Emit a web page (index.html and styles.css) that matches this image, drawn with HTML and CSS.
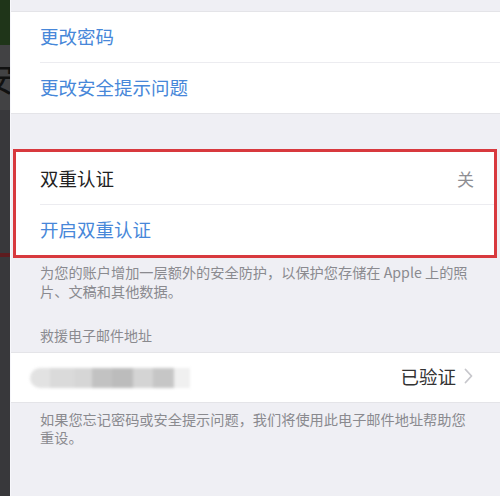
FILE: index.html
```html
<!DOCTYPE html>
<html lang="zh-CN">
<head>
    <meta charset="UTF-8">
    <meta name="viewport" content="width=device-width, initial-scale=1.0">
    <link rel="stylesheet" href="styles.css">
    <title>密码与安全性</title>
</head>
<body>
    <div class="screen">
        <div class="side-strip">
            <div class="strip-green"></div>
            <div class="strip-glyph"><span>安</span></div>
            <div class="strip-gap"></div>
            <div class="strip-red"></div>
        </div>
        <div class="page">
            <div class="group">
                <div class="cell link">更改密码</div>
                <div class="sep"></div>
                <div class="cell link">更改安全提示问题</div>
            </div>

            <div class="group boxed">
                <div class="cell cell-first">
                    <span class="label">双重认证</span>
                    <span class="value">关</span>
                </div>
                <div class="sep"></div>
                <div class="cell link">开启双重认证</div>
            </div>
            <p class="footnote first-note">为您的账户增加一层额外的安全防护，以保护您存储在 Apple 上的照片、文稿和其他数据。</p>

            <p class="section-title">救援电子邮件地址</p>
            <div class="group">
                <div class="cell email-cell">
                    <div class="blurred">
                        <i class="b1"></i><i class="b2"></i><i class="b3"></i><i class="b4"></i><i class="b5"></i><i class="b6"></i><i class="b7"></i><i class="b8"></i>
                    </div>
                    <span class="verified">已验证</span>
                    <svg class="chevron" width="9" height="16" viewBox="0 0 9 16">
                        <path d="M1.5 1.5 L7.5 8 L1.5 14.5" fill="none" stroke="#c7c7cc" stroke-width="1.8" stroke-linecap="round" stroke-linejoin="round"/>
                    </svg>
                </div>
            </div>
            <p class="footnote last-note">如果您忘记密码或安全提示问题，我们将使用此电子邮件地址帮助您重设。</p>
        </div>
    </div>
</body>
</html>
```

FILE: styles.css
```css
body {
    margin: 0;
    background-color: #efeff4;
    font-family: "Noto Sans CJK SC", "Noto Sans", sans-serif;
}

.screen {
    display: flex;
    width: 500px;
    height: 496px;
    overflow: hidden;
}

.side-strip {
    width: 10px;
    flex-shrink: 0;
    display: flex;
    flex-direction: column;
    background-color: #38383b;
    border-right: 1px solid #f7f7fb;
}

.strip-green {
    height: 45px;
    background-color: #1f3519;
}

.strip-glyph {
    height: 65px;
    display: flex;
    justify-content: flex-end;
    align-items: center;
    overflow: hidden;
    background-color: #424244;
}

.strip-glyph span {
    font-size: 34px;
    line-height: 1;
    color: #111;
    flex-shrink: 0;
    margin-right: -4px;
}

.strip-gap {
    height: 143px;
}

.strip-red {
    height: 4px;
    background-color: #5c1c1f;
}

.page {
    flex: 1;
    padding-top: 11px;
    background-color: #efeff4;
}

.group {
    background-color: #fff;
    border-top: 1px solid #e4e4e8;
    border-bottom: 1px solid #e4e4e8;
}

.cell {
    height: 50px;
    box-sizing: border-box;
    padding: 0 24px 3px 29px;
    display: flex;
    align-items: center;
    font-size: 18.5px;
    color: #222;
}

.link {
    color: #4787d9;
}

.sep {
    height: 1px;
    margin-left: 29px;
    background-color: #ececf0;
}

.boxed {
    margin: 35px 3px 0 2px;
    border: 3px solid #d8393e;
}

.boxed .cell {
    padding-left: 24px;
}

.boxed .sep {
    margin-left: 24px;
}

.cell-first {
    height: 52px;
    padding-top: 3px;
    justify-content: space-between;
}

.value {
    font-size: 17px;
    color: #8e8e93;
    margin-right: -4px;
}

.footnote {
    margin: 0;
    padding: 0 30px 0 29px;
    font-size: 14.2px;
    line-height: 19px;
    color: #8a8a8f;
}

.first-note {
    margin-top: 5px;
}

.last-note {
    margin-top: 7px;
    line-height: 18px;
}

.section-title {
    margin: 25px 0 7px;
    padding-left: 29px;
    font-size: 14px;
    line-height: 19px;
    color: #8a8a8f;
}

.email-cell {
    height: 49px;
    padding-left: 19px;
    padding-right: 27px;
}

.blurred {
    display: flex;
    height: 20px;
    filter: blur(1.5px);
    margin-top: 3px;
}

.blurred i {
    display: block;
    height: 20px;
}

.blurred .b1 { width: 20px; background: #e2e2e2; border-radius: 10px 0 0 10px; }
.blurred .b2 { width: 24px; background: #dadada; }
.blurred .b3 { width: 18px; background: #d6d6d6; }
.blurred .b4 { width: 20px; background: #c2c2c2; }
.blurred .b5 { width: 21px; background: #bcbcbc; }
.blurred .b6 { width: 20px; background: #d4d4d4; }
.blurred .b7 { width: 21px; background: #c6c6c6; }
.blurred .b8 { width: 16px; background: #f0f0f0; }

.verified {
    margin-left: auto;
    color: #333;
}

.chevron {
    margin-left: 8px;
}
```
